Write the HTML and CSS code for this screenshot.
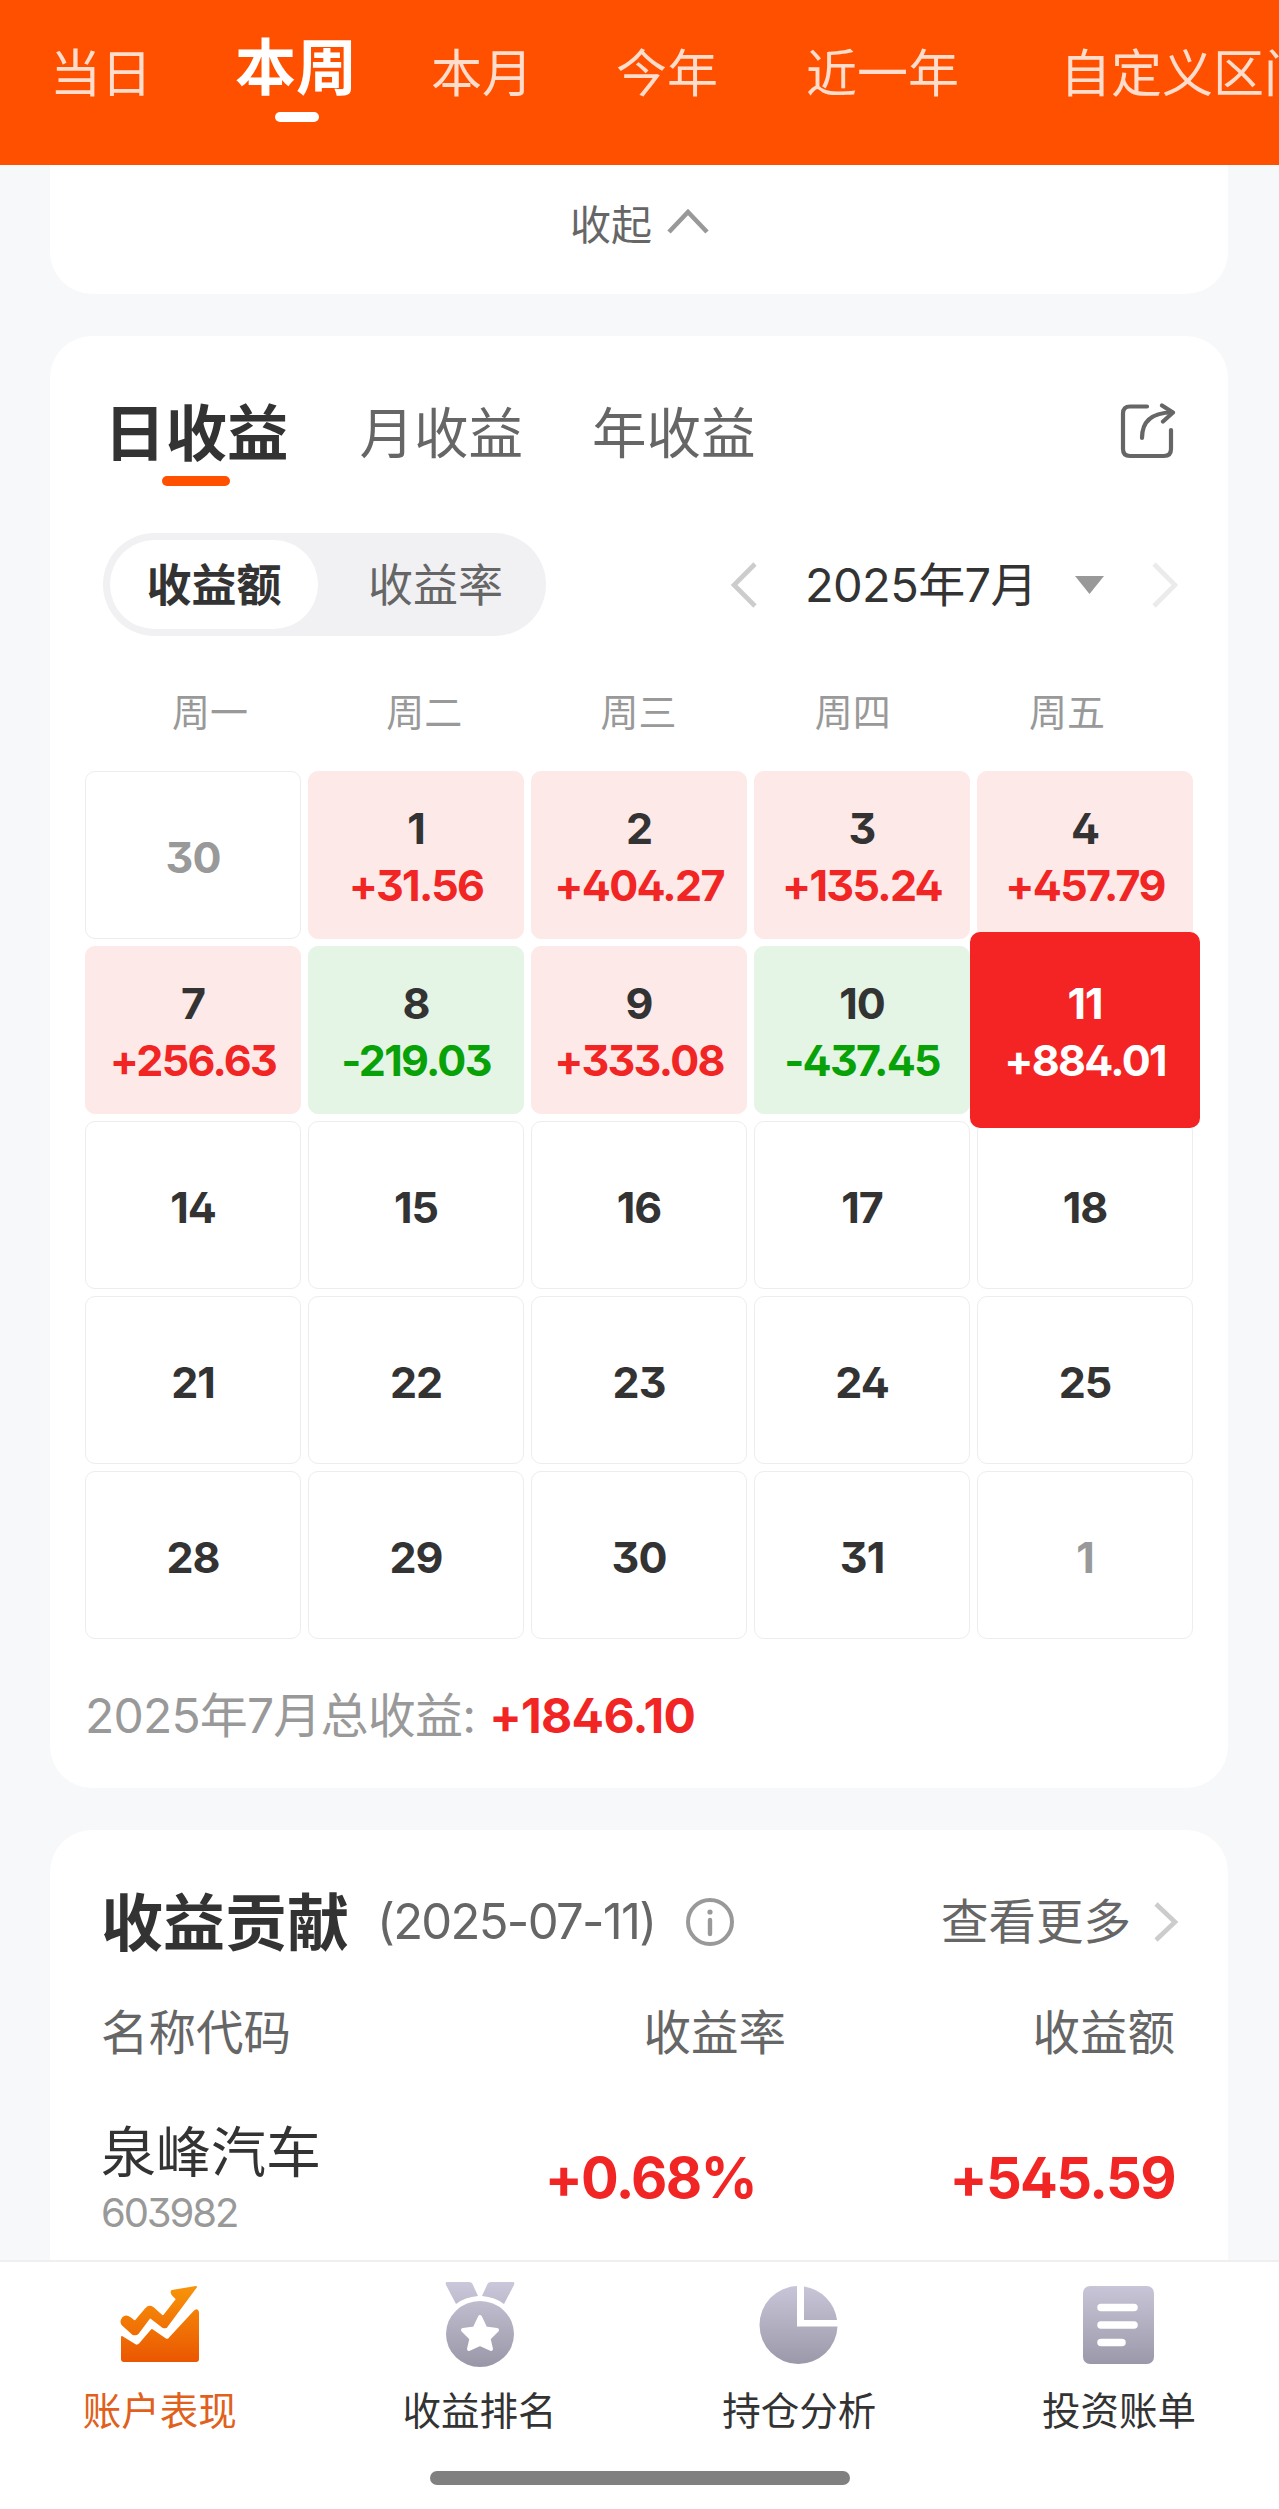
FILE: index.html
```html
<!DOCTYPE html>
<html lang="zh-CN">
<head>
<meta charset="utf-8">
<title>账户表现</title>
<link rel="stylesheet" href="styles.css">
</head>
<body>
<div class="app">
  <header class="period-tabs">
    <span class="period">当日</span>
    <span class="period period-active">本周</span>
    <span class="period">本月</span>
    <span class="period">今年</span>
    <span class="period">近一年</span>
    <span class="period">自定义区间</span>
  </header>

  <main class="content">
    <section class="card collapse">
      <span>收起</span>
      <svg class="collapse-icon" width="42" height="26" viewBox="0 0 42 26"><path d="M2 24 21 4l19 20" fill="none" stroke="#999" stroke-width="4.6"/></svg>
    </section>

    <section class="card calendar">
      <div class="range-tabs">
        <span class="range range-active">日收益</span>
        <span class="range">月收益</span>
        <span class="range">年收益</span>
        <svg class="share" width="56" height="56" viewBox="0 0 56 56" fill="none" stroke="#666" stroke-width="4.2" stroke-linecap="round"><path d="M27 3.500H10Q3 3.500 3 10.500V46q0 7 7 7h34q7 0 7-7V27"/><path d="M22 35C22 20 30 9.500 52 9.500"/><path d="M42 2.500 53 9.500 43 18.500" stroke-linejoin="round"/></svg>
      </div>

      <div class="toolbar">
        <div class="segment">
          <span class="segment-item segment-on">收益额</span>
          <span class="segment-item">收益率</span>
        </div>
        <div class="month">
          <svg width="28" height="46" viewBox="0 0 28 46"><path d="M25 2 4 23l21 21" fill="none" stroke="#ccc" stroke-width="4.6"/></svg>
          <span class="month-name">2025年7月</span>
          <svg class="caret" width="29" height="18" viewBox="0 0 29 18"><path d="M0 0h29L14.500 18z" fill="#999"/></svg>
          <svg width="28" height="46" viewBox="0 0 28 46"><path d="m3 2 21 21L3 44" fill="none" stroke="#ebebeb" stroke-width="4.600"/></svg>
        </div>
      </div>

      <div class="weekdays"><span>周一</span><span>周二</span><span>周三</span><span>周四</span><span>周五</span></div>

      <div class="days">
        <div class="day muted">30</div>
        <div class="day gain">1<b>+31.56</b></div>
        <div class="day gain">2<b>+404.27</b></div>
        <div class="day gain">3<b>+135.24</b></div>
        <div class="day gain">4<b>+457.79</b></div>
        <div class="day gain">7<b>+256.63</b></div>
        <div class="day loss">8<b>-219.03</b></div>
        <div class="day gain">9<b>+333.08</b></div>
        <div class="day loss">10<b>-437.45</b></div>
        <div class="day selected">11<b>+884.01</b></div>
        <div class="day">14</div>
        <div class="day">15</div>
        <div class="day">16</div>
        <div class="day">17</div>
        <div class="day">18</div>
        <div class="day">21</div>
        <div class="day">22</div>
        <div class="day">23</div>
        <div class="day">24</div>
        <div class="day">25</div>
        <div class="day">28</div>
        <div class="day">29</div>
        <div class="day">30</div>
        <div class="day">31</div>
        <div class="day muted">1</div>
      </div>

      <div class="total"><span>2025年7月总收益:</span><b>+1846.10</b></div>
    </section>

    <section class="card contribution">
      <div class="contribution-head">
        <h2>收益贡献</h2>
        <span class="date">(2025-07-11)</span>
        <svg class="info" width="48" height="48" viewBox="0 0 48 48"><circle cx="24" cy="24" r="22" fill="none" stroke="#999" stroke-width="4"/><circle cx="24" cy="14" r="2.600" fill="#999"/><path d="M24 22v14" stroke="#999" stroke-width="4.400" stroke-linecap="round"/></svg>
        <span class="more">查看更多</span>
        <svg width="26" height="40" viewBox="0 0 26 40"><path d="m3 2 19 18L3 38" fill="none" stroke="#ccc" stroke-width="4.600"/></svg>
      </div>
      <div class="columns"><span>名称代码</span><span>收益率</span><span>收益额</span></div>
      <div class="holding">
        <div class="stock"><span class="stock-name">泉峰汽车</span><span class="stock-code">603982</span></div>
        <b>+0.68%</b>
        <b>+545.59</b>
      </div>
    </section>
  </main>

  <nav class="tabbar">
    <svg class="defs" width="0" height="0"><defs>
      <linearGradient id="orange" x1="0" y1="0" x2="0" y2="84" gradientUnits="userSpaceOnUse"><stop offset="0" stop-color="#f8940a"/><stop offset="1" stop-color="#e95000"/></linearGradient>
      <linearGradient id="gray" x1="0" y1="0" x2="0" y2="88" gradientUnits="userSpaceOnUse"><stop offset="0" stop-color="#cac8da"/><stop offset="1" stop-color="#9896a6"/></linearGradient>
    </defs></svg>
    <a class="tab tab-on">
      <svg width="86" height="88" viewBox="0 0 86 88"><g transform="translate(4 5)" fill="url(#orange)" stroke="url(#orange)" stroke-width="2" stroke-linejoin="round"><path d="M75 1 51 5q-1 2 1 4l4 4-14 18-10-9q-4-3-7 1L14 36 9 32q-4-3-7 0-3 4 0 7l10 9q3 1 5-1l12-16 13 10q3 1 4-1z"/><path d="M1 51 14 59q2 2 5-1l12-14 13 9q3 2 5-1L74 25q3-2 3 2V73q0 2-2 2H3q-2 0-2-2z"/></g></svg>
      <span>账户表现</span>
    </a>
    <a class="tab">
      <svg width="86" height="88" viewBox="0 0 86 88"><g fill="url(#gray)"><path d="M10 1h22q3 0 4 3l5 11q-13 1-22 8L9 4q-1-3 1-3zM76 1H54q-3 0-4 3l-5 11q13 1 22 8L77 4q1-3-1-3z"/><ellipse cx="43" cy="53" rx="34" ry="33"/></g><path d="m43 36 5.500 11.500L60 49l-8.500 8.500L54 68l-11-5-11 5 2.500-10.500L26 49l11.500-1.500z" fill="#fff" stroke="#fff" stroke-width="4" stroke-linejoin="round"/></svg>
      <span>收益排名</span>
    </a>
    <a class="tab">
      <svg width="86" height="88" viewBox="0 0 86 88"><g fill="url(#gray)"><path d="M41 5v40.500h40.500A39 39 0 1 1 41 5z"/><path d="M48 5.500A39 39 0 0 1 81 39H48z"/></g></svg>
      <span>持仓分析</span>
    </a>
    <a class="tab">
      <svg width="86" height="88" viewBox="0 0 86 88"><rect x="7" y="5" width="71" height="78" rx="7" fill="url(#gray)"/><path d="M25 26.500h33M25 44h33M25 61.500h21" stroke="#fff" stroke-width="7.500" stroke-linecap="round"/></svg>
      <span>投资账单</span>
    </a>
    <i class="home-bar"></i>
  </nav>
</div>
</body>
</html>
```
FILE: styles.css
```css
* { box-sizing: border-box; }

body {
  margin: 0;
  background: #f7f8fa;
  color: #333;
  font-family: Inter, "Noto Sans CJK SC", sans-serif;
  font-feature-settings: "cv02", "cv09";
}

svg { display: block; flex: none; }
b { font-weight: 700; }

.app {
  display: flex;
  flex-direction: column;
  width: 1279px;
  height: 2509px;
  overflow: hidden;
  white-space: nowrap;
}

/* period tabs */
.period-tabs {
  display: grid;
  grid-template-columns: 185px 196px 185px 190px 254px 300px;
  flex: none;
  height: 165px;
  padding-left: 50px;
  background: #ff5000;
  overflow: hidden;
}
.period {
  padding-top: 48px;
  font-size: 51px;
  line-height: 52px;
  color: #ffdccb;
}
.period-active {
  padding-top: 38px;
  font-size: 61px;
  line-height: 60px;
  font-weight: 700;
  color: #fff;
}
.period-active::after {
  content: "";
  display: block;
  width: 44px;
  height: 10px;
  margin: 14px 0 0 40px;
  border-radius: 5px;
  background: #fff;
}

.content {
  display: flex;
  flex-direction: column;
  flex: none;
  gap: 42px;
  height: 2095px;
  padding: 0 51px 0 50px;
  overflow: hidden;
}
.card { flex: none; border-radius: 42px; background: #fff; }

.collapse {
  display: flex;
  justify-content: center;
  gap: 15px;
  height: 129px;
  padding: 34px 0 0 1px;
  border-radius: 0 0 42px 42px;
  font-size: 41px;
  line-height: 52px;
  color: #666;
}
.collapse-icon { margin-top: 9px; }

/* calendar */
.calendar { height: 1452px; padding: 64px 35px 0; }
.range-tabs {
  display: flex;
  gap: 69px;
  height: 133px;
  padding-left: 19px;
}
.range { font-size: 54.500px; line-height: 67px; color: #666; }
.range-active {
  margin-right: 2px;
  font-size: 61.500px;
  line-height: 68px;
  font-weight: 700;
  color: #333;
}
.range-active::after {
  content: "";
  display: block;
  width: 68px;
  height: 10px;
  margin: 8px auto 0;
  border-radius: 5px;
  background: #ff5000;
}
.share { margin: 3px 17px 0 auto; }

.toolbar {
  display: flex;
  justify-content: space-between;
  height: 103px;
  padding: 0 14px 0 18px;
}
.segment {
  display: flex;
  width: 443px;
  padding: 7px;
  border-radius: 52px;
  background: #f1f1f4;
}
.segment-item {
  width: 221px;
  padding-left: 14px;
  font-size: 45px;
  line-height: 91px;
  text-align: center;
  color: #666;
}
.segment-on {
  width: 208px;
  padding-left: 0;
  border-radius: 45px;
  background: #fff;
  font-weight: 700;
  color: #333;
}
.month { display: flex; align-items: center; }
.month-name {
  width: 230px;
  margin: 0 40px 0 47px;
  font-size: 47px;
  line-height: 46px;
  letter-spacing: -0.6px;
}
.caret { margin-right: 47px; }

.weekdays {
  display: grid;
  grid-template-columns: repeat(5, 1fr);
  margin: 50px 19px 33px 18px;
  font-size: 38px;
  line-height: 52px;
  text-align: center;
  color: #999;
}

.days {
  display: grid;
  grid-template-columns: repeat(5, 216px);
  grid-auto-rows: 168px;
  gap: 7px;
}
.day {
  display: flex;
  flex-direction: column;
  align-items: center;
  justify-content: center;
  padding-top: 4px;
  border: 1px solid #ededed;
  border-radius: 10px;
  font-size: 43px;
  line-height: 57px;
  font-weight: 700;
  letter-spacing: -1px;
}
.day b { letter-spacing: -1.7px; }
.gain { border-color: #fde9e8; background: #fde9e8; }
.gain b { color: #f22525; }
.loss { border-color: #e4f4e5; background: #e4f4e5; }
.loss b { color: #08a108; }
.muted { color: #999; }
.selected {
  z-index: 1;
  margin: -14px -7px;
  border: 0;
  background: #f42424;
  color: #fff;
}

.total {
  display: flex;
  gap: 14px;
  padding-top: 46px;
  font-size: 48px;
  line-height: 62px;
  letter-spacing: -0.8px;
  color: #999;
}
.total b { color: #f22525; letter-spacing: -0.7px; }

/* contribution */
.contribution { height: 500px; padding: 60px 53px 0 51px; }
.contribution-head {
  display: flex;
  align-items: center;
  height: 64px;
  line-height: 64px;
}
h2 { margin: 4px 0 0; font-size: 62px; line-height: 64px; }
.date { margin-left: 28px; font-size: 49px; letter-spacing: -1.7px; color: #666; }
.info { margin-left: 31px; }
.more { margin: 0 22px 0 auto; font-size: 47.500px; color: #666; }
.contribution-head svg:last-child { margin-right: -4px; }

.columns {
  display: grid;
  grid-template-columns: 300px 1fr 389px;
  margin-top: 49px;
  font-size: 47.500px;
  line-height: 60px;
  text-align: right;
  color: #666;
}
.columns span:first-child { text-align: left; }

.holding {
  display: grid;
  grid-template-columns: 300px 1fr 419px;
  margin-top: 57px;
  text-align: right;
}
.holding b {
  padding-top: 24px;
  font-size: 56px;
  line-height: 68px;
  letter-spacing: -1.600px;
  color: #f22525;
}
.stock { display: flex; flex-direction: column; text-align: left; }
.stock-name { font-size: 55px; line-height: 64px; }
.stock-code { font-size: 40px; line-height: 58px; letter-spacing: -2.100px; color: #999; }

/* bottom navigation */
.tabbar {
  display: grid;
  grid-template-columns: repeat(4, 1fr);
  flex: none;
  height: 249px;
  padding-top: 19px;
  border-top: 2px solid #efeff0;
  background: #fff;
  align-content: start;
}
.defs { position: absolute; }
.tab {
  display: flex;
  flex-direction: column;
  align-items: center;
  gap: 14px;
  height: 190px;
  font-size: 38.500px;
  line-height: 56px;
}
.tab-on { color: #e0601c; }
.home-bar {
  grid-column: 1 / -1;
  justify-self: center;
  width: 420px;
  height: 14px;
  border-radius: 7px;
  background: #808080;
}
```
